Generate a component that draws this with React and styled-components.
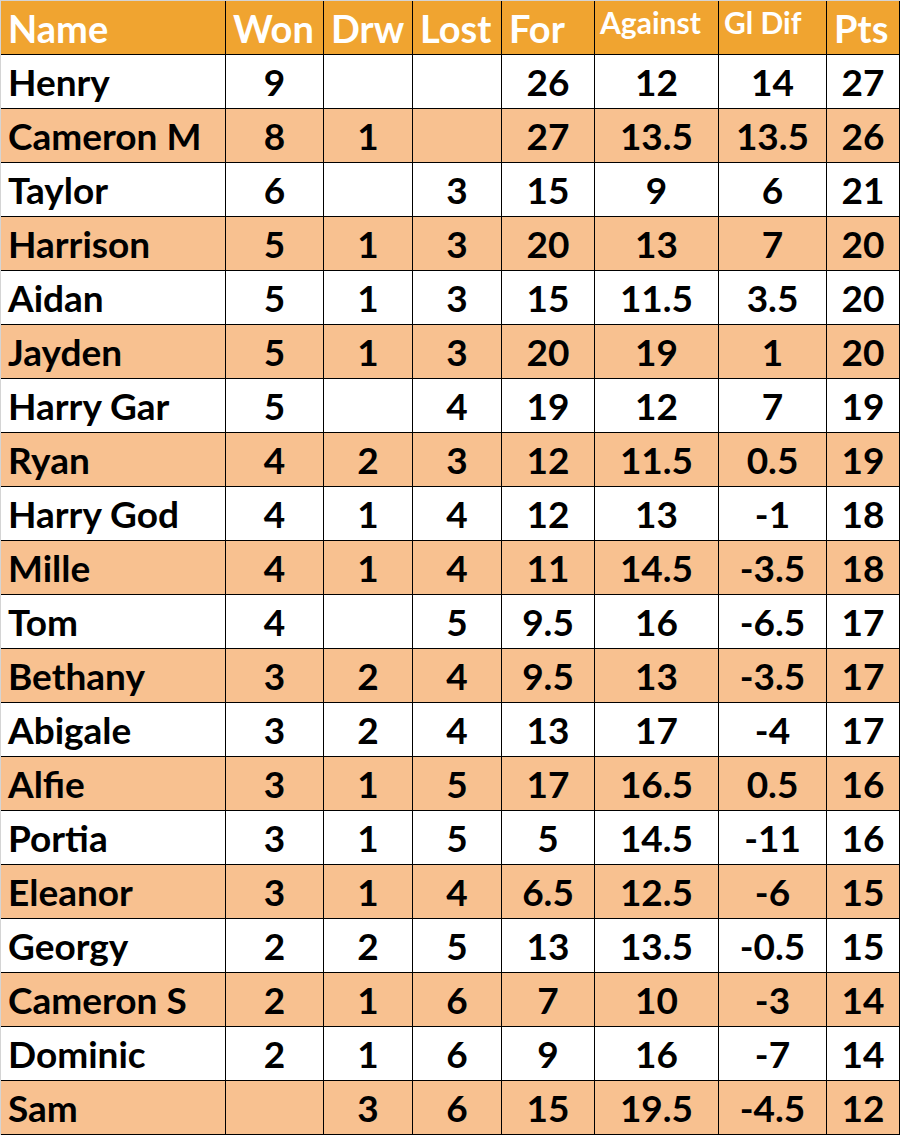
import React from 'react';
import styled, { createGlobalStyle } from 'styled-components';

const GlobalStyle = createGlobalStyle`
  body {
    margin: 0;
    padding: 0;
    background: #fff;
    font-family: Lato, 'Liberation Sans', sans-serif;
  }
`;

const Sheet = styled.div`
  display: grid;
  grid-template-columns: 225px 98px 89px 89px 93px 124px 108px 73px;
  grid-auto-rows: 54px;
  width: 899px;
  border-top: 1px solid #d4d4d4;
  border-left: 1px solid #d4d4d4;
`;

const HeadCell = styled.div`
  display: flex;
  align-items: ${(p) => (p.$small ? 'flex-start' : 'center')};
  padding: ${(p) => (p.$small ? '3px 0 0 5px' : '0 0 0 7px')};
  box-sizing: border-box;
  background: #f0a430;
  color: #fff;
  font-weight: 700;
  font-size: ${(p) => (p.$small ? '30px' : '38px')};
  border-right: 1px solid #000;
  border-bottom: 1px solid #000;
  white-space: nowrap;
  overflow: hidden;
`;

const Cell = styled.div`
  display: flex;
  align-items: center;
  justify-content: ${(p) => (p.$name ? 'flex-start' : 'center')};
  padding: ${(p) => (p.$name ? '0 0 0 7px' : '0')};
  box-sizing: border-box;
  background: ${(p) => (p.$alt ? '#f8c190' : '#fff')};
  color: #000;
  font-weight: 700;
  font-size: 37px;
  border-right: 1px solid #000;
  border-bottom: 1px solid #000;
  white-space: nowrap;
  overflow: hidden;
`;

const headers = [
  { label: 'Name' },
  { label: 'Won' },
  { label: 'Drw' },
  { label: 'Lost' },
  { label: 'For' },
  { label: 'Against', small: true },
  { label: 'Gl Dif', small: true },
  { label: 'Pts' },
];

const rows = [
  ['Henry', '9', '', '', '26', '12', '14', '27'],
  ['Cameron M', '8', '1', '', '27', '13.5', '13.5', '26'],
  ['Taylor', '6', '', '3', '15', '9', '6', '21'],
  ['Harrison', '5', '1', '3', '20', '13', '7', '20'],
  ['Aidan', '5', '1', '3', '15', '11.5', '3.5', '20'],
  ['Jayden', '5', '1', '3', '20', '19', '1', '20'],
  ['Harry Gar', '5', '', '4', '19', '12', '7', '19'],
  ['Ryan', '4', '2', '3', '12', '11.5', '0.5', '19'],
  ['Harry God', '4', '1', '4', '12', '13', '-1', '18'],
  ['Mille', '4', '1', '4', '11', '14.5', '-3.5', '18'],
  ['Tom', '4', '', '5', '9.5', '16', '-6.5', '17'],
  ['Bethany', '3', '2', '4', '9.5', '13', '-3.5', '17'],
  ['Abigale', '3', '2', '4', '13', '17', '-4', '17'],
  ['Alfie', '3', '1', '5', '17', '16.5', '0.5', '16'],
  ['Portia', '3', '1', '5', '5', '14.5', '-11', '16'],
  ['Eleanor', '3', '1', '4', '6.5', '12.5', '-6', '15'],
  ['Georgy', '2', '2', '5', '13', '13.5', '-0.5', '15'],
  ['Cameron S', '2', '1', '6', '7', '10', '-3', '14'],
  ['Dominic', '2', '1', '6', '9', '16', '-7', '14'],
  ['Sam', '', '3', '6', '15', '19.5', '-4.5', '12'],
];

const App = () => (
  <>
    <GlobalStyle />
    <Sheet>
      {headers.map((h) => (
        <HeadCell key={h.label} $small={h.small}>
          {h.label}
        </HeadCell>
      ))}
      {rows.map((row, r) =>
        row.map((val, c) => (
          <Cell key={`${r}-${c}`} $name={c === 0} $alt={r % 2 === 1}>
            {val}
          </Cell>
        ))
      )}
    </Sheet>
  </>
);

export default App;
